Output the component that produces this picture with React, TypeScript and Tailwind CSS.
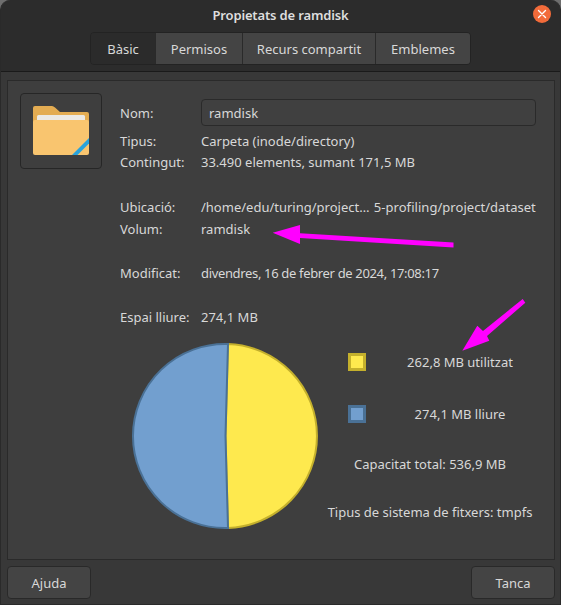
import { ReactNode } from 'react';

const tabs = [
  { label: 'Bàsic', width: 'w-[64px]', active: true },
  { label: 'Permisos', width: 'w-[87px]', active: false },
  { label: 'Recurs compartit', width: 'w-[133px]', active: false },
  { label: 'Emblemes', width: 'w-[95px]', active: false },
];

function Row({ label, className, children }: { label: string; className: string; children: ReactNode }) {
  return (
    <div className={`flex items-center h-5 ${className}`}>
      <span className="w-[81px] tracking-normal">{label}</span>
      <span className="whitespace-nowrap">{children}</span>
    </div>
  );
}

function FolderIcon() {
  return (
    <svg width="56" height="50" viewBox="0 0 56 50" aria-hidden="true">
      <path d="M2 0h17c1 0 2 .5 3 1.500L27 6h27a2 2 0 012 2v10H0V2a2 2 0 012-2z" fill="#e3ac52" />
      <rect x="4" y="9" width="48" height="12" rx="1.500" fill="#ebe9e4" />
      <path d="M0 16a2 2 0 012-2h52a2 2 0 012 2v31a2 2 0 01-2 2H2a2 2 0 01-2-2z" fill="#f9c56f" />
      <path d="M39 49l17-17v5.500L44.500 49z" fill="#29a3dc" />
    </svg>
  );
}

function Legend({ swatch, className, children }: { swatch: string; className: string; children: ReactNode }) {
  return (
    <div className={`flex items-center h-5 ${className}`}>
      <span className={`w-[18px] h-[18px] shrink-0 border-[3px] ${swatch}`} />
      <span className="flex-1 text-center whitespace-nowrap">{children}</span>
    </div>
  );
}

export default function App() {
  return (
    <div className="relative w-[561px] h-[605px] bg-[#6e6e6e] overflow-hidden font-['Noto_Sans',sans-serif] text-[13px] leading-5 text-[#d8d8d8]">
      <div className="h-full flex flex-col rounded-t-[10px] bg-[#383838] border-x border-b border-[#2a2a2a]">
        {/* title bar */}
        <header className="h-[72px] shrink-0 bg-[#2c2c2c] border-b border-[#1a1a1a] rounded-t-[10px] flex flex-col items-center">
          <div className="w-full h-[32px] grid grid-cols-[1fr_auto_1fr] items-start">
            <span />
            <h1 className="mt-[5px] font-semibold tracking-[-0.15px] text-[#dedede]">Propietats de ramdisk</h1>
            <div className="flex justify-end pt-[5px] pr-[9px]">
              <span className="w-[18px] h-[18px] rounded-full bg-[#f26b3a] flex items-center justify-center">
                <svg width="10" height="10" viewBox="0 0 10 10" aria-hidden="true">
                  <path d="M1.500 1.500l7 7M8.500 1.500l-7 7" stroke="#fff" strokeWidth="1.400" strokeLinecap="round" />
                </svg>
              </span>
            </div>
          </div>
          <nav className="flex h-[33px] border border-[#232323] rounded-[4px] overflow-hidden">
            {tabs.map((tab, i) => (
              <span
                key={tab.label}
                className={`${tab.width} flex items-center justify-center ${i > 0 ? 'border-l border-[#2a2a2a]' : ''} ${
                  tab.active ? 'bg-[#2b2b2b]' : 'bg-[#444444]'
                }`}
              >
                {tab.label}
              </span>
            ))}
          </nav>
        </header>

        {/* frame */}
        <main className="ml-[6px] mr-[5px] mt-[8px] h-[480px] border border-[#2a2a2a] bg-[#3e3e3e] pl-3 pt-3">
          <div className="flex">
            <div className="w-[82px] h-[76px] shrink-0 border border-[#262626] rounded-[4px] flex items-center justify-center">
              <FolderIcon />
            </div>
            <div className="ml-[18px] flex-1 pt-[6px]">
              <div className="flex items-center h-[27px]">
                <span className="w-[81px]">Nom:</span>
                <div className="w-[335px] h-[27px] border border-[#2a2a2a] rounded-[4px] bg-[#404040] px-[7px] flex items-center">
                  ramdisk
                </div>
              </div>
              <Row label="Tipus:" className="mt-[5px]">Carpeta (inode/directory)</Row>
              <Row label="Contingut:" className="mt-px">33.490 elements, sumant 171,5 MB</Row>
              <Row label="Ubicació:" className="mt-[25px]">
                /home/edu/turing/project… <span className="ml-px tracking-[0.04px]">5-profiling/project/dataset</span>
              </Row>
              <Row label="Volum:" className="mt-[2px]">ramdisk</Row>
              <Row label="Modificat:" className="mt-6">
                <span className="tracking-[-0.34px]">divendres, 16 de febrer de 2024, 17:08:17</span>
              </Row>
              <Row label="Espai lliure:" className="mt-6">274,1 MB</Row>
            </div>
          </div>

          <div className="flex pl-[111px] pt-[15px]">
            <svg width="188" height="188" viewBox="0 0 188 188" className="shrink-0" aria-hidden="true">
              <path d="M97 2.050A92 92 0 0197 185.950L94.500 94z" fill="#fee94e" stroke="#c4b02c" strokeWidth="2" />
              <path d="M97 2.050A92 92 0 1097 185.950L94.500 94z" fill="#729fcf" stroke="#4a7196" strokeWidth="2" />
            </svg>
            <div className="ml-[29px] flex-1 min-w-0">
              <Legend swatch="bg-[#fee94e] border-[#c4b02c]" className="mt-[10px]">262,8 MB utilitzat</Legend>
              <Legend swatch="bg-[#729fcf] border-[#4a7196]" className="mt-8">274,1 MB lliure</Legend>
              <div className="mt-[30px] h-5 pr-[42px] flex justify-center whitespace-nowrap">Capacitat total: 536,9 MB</div>
              <div className="mt-7 h-5 pr-[42px] flex justify-center whitespace-nowrap">Tipus de sistema de fitxers: tmpfs</div>
            </div>
          </div>
        </main>

        {/* footer */}
        <footer className="flex justify-between pl-[6px] pr-[5px] pt-[6px]">
          <button className="w-[84px] h-[33px] border border-[#292929] rounded-[4px] bg-[#444444]">Ajuda</button>
          <button className="w-[84px] h-[33px] border border-[#292929] rounded-[4px] bg-[#444444]">Tanca</button>
        </footer>
      </div>

      {/* annotation arrows on top of the screenshot */}
      <svg className="absolute inset-0 pointer-events-none" width="561" height="605" viewBox="0 0 561 605" aria-hidden="true">
        <polygon
          points="272.700,232.700 300,225 300,233.300 453.500,242.500 453.500,247.500 300,238 300,244"
          fill="#ff00ff"
        />
        <polygon
          points="462.300,350.700 477.300,325.700 483,331 522.700,299 525.300,302.700 487,336 489.300,340.700"
          fill="#ff00ff"
        />
      </svg>
    </div>
  );
}
